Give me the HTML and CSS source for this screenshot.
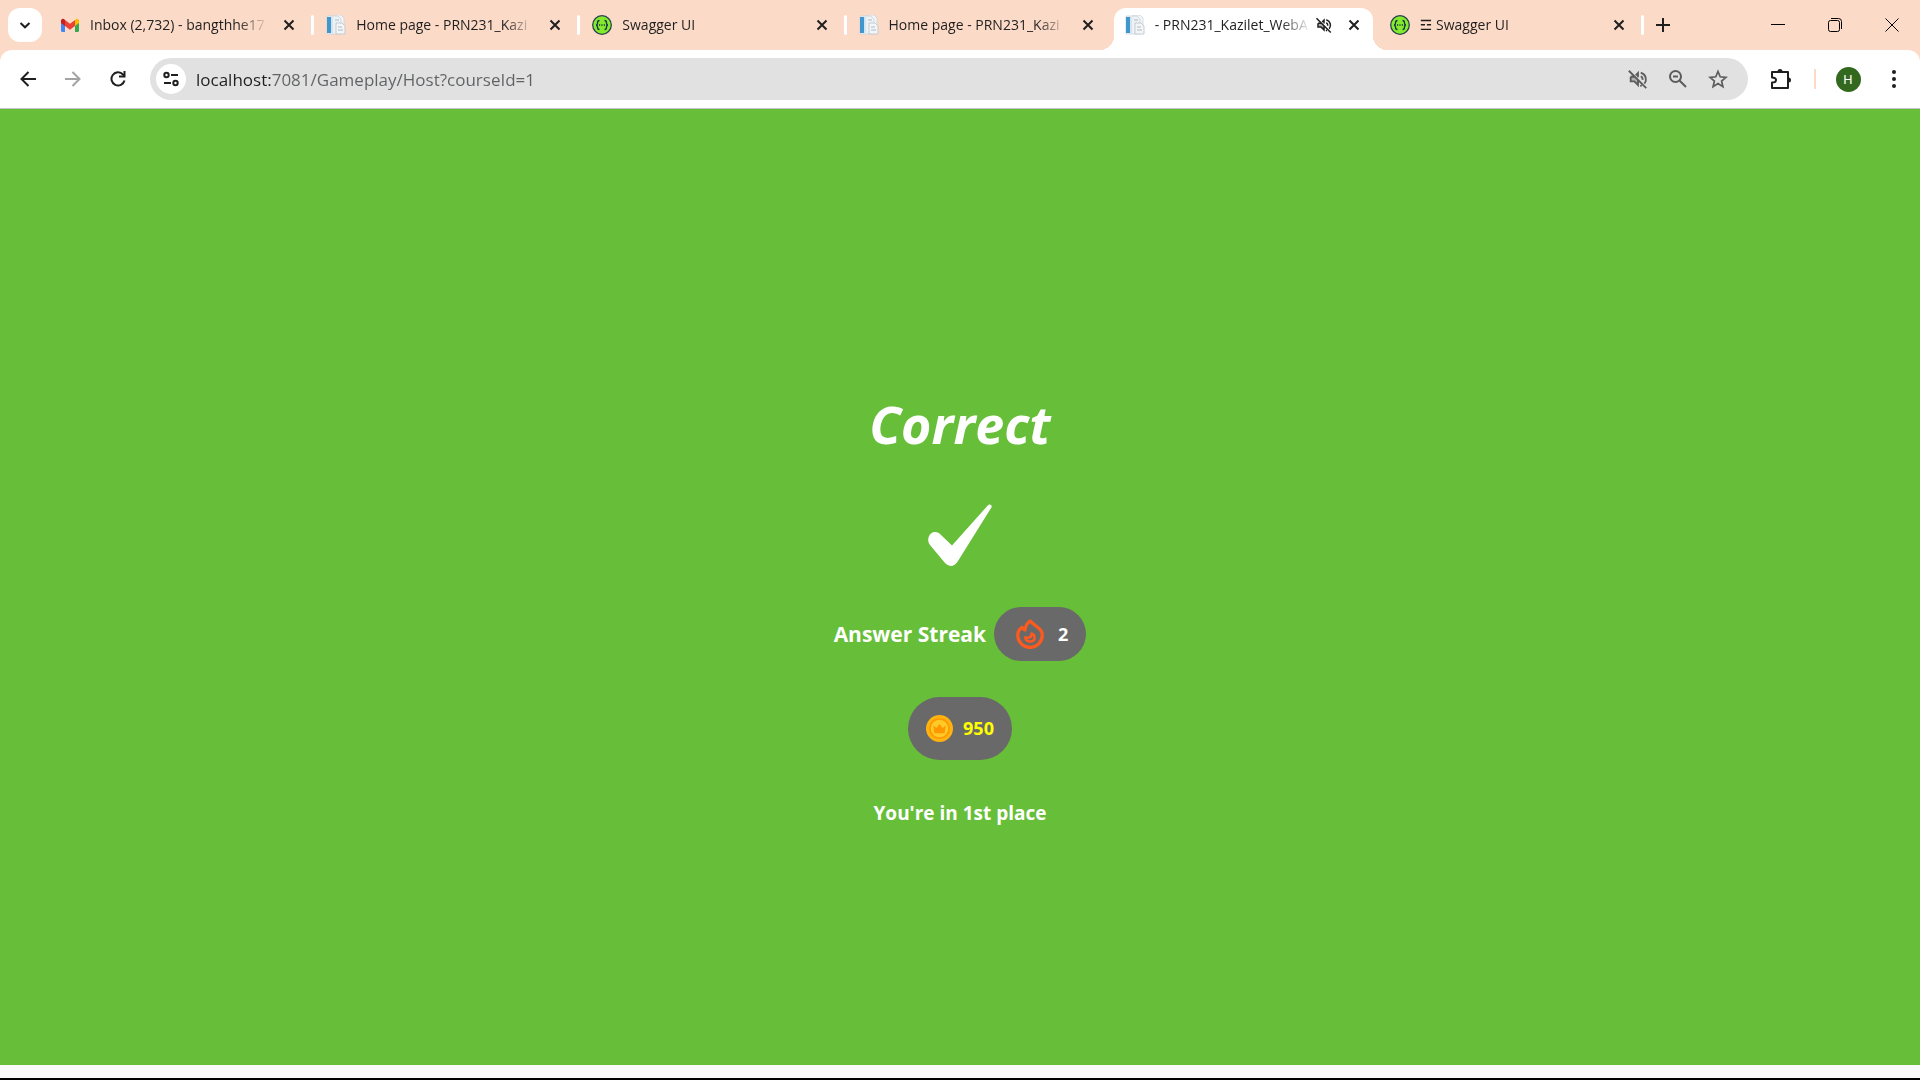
FILE: index.html
```html
<!DOCTYPE html>
<html lang="en">
<head>
<meta charset="utf-8">
<title>PRN231_Kazilet_WebApp</title>
<link rel="stylesheet" href="styles.css">
</head>
<body>
<svg class="defs" aria-hidden="true">
  <symbol id="close" viewBox="0 0 12 12"><path d="M1.500 1.500l9 9m0-9l-9 9" fill="none" stroke="currentColor" stroke-width="2"/></symbol>
  <symbol id="pages" viewBox="0 0 20 20">
    <path d="M8 0h7l3 3v12H8z" fill="#f3f6f8" stroke="#c6d0d7" stroke-width=".7"/>
    <path d="M1 1h11l3 3v15H1z" fill="#edf2f5" stroke="#c6d0d7" stroke-width=".7"/>
    <path d="M1 2h4v16H1z" fill="#4097ce"/><path d="M5 2h2v16H5z" fill="#d5e4ee"/>
    <path d="M10 8h6l3 3v8h-9z" fill="#f3f5f7" stroke="#b9c3ca" stroke-width=".8"/>
    <path d="M9 5h4M12 12h4M12 15h5" stroke="#aebbc5"/>
  </symbol>
  <symbol id="swagger" viewBox="0 0 20 20">
    <circle cx="10" cy="10" r="9.300" fill="#85ea2d" stroke="#26454b" stroke-width="1.300"/>
    <path d="M7.500 5.500c-2 0-2 .8-2 2.300S5.300 10 4 10c1.300 0 1.500.7 1.500 2.200s0 2.300 2 2.300M12.500 5.500c2 0 2 .8 2 2.300s.2 2.200 1.500 2.200c-1.300 0-1.500.7-1.500 2.200s0 2.300-2 2.300" fill="none" stroke="#173647" stroke-width="1.300"/>
    <path d="M7 10h1.200m1.200 0h1.200m1.200 0H13" stroke="#173647" stroke-width="1.300"/>
  </symbol>
  <symbol id="muted" viewBox="0 0 24 24">
    <path d="M2 3l19 19M4 9.500v5h4l4 4v-6M9.500 8L12 5.500V10M4 9.500h4M15 5c6 2 7 8 4 12M15 9c1.500.7 2.200 2 2 4M16 19l-1.500.7" fill="none" stroke="currentColor" stroke-width="2"/>
    <path d="M4 9.500h5l3 3v6l-4-4H4z" fill="currentColor" fill-opacity=".35"/>
  </symbol>
</svg>

<header class="browser">
  <div class="tabstrip">
    <button class="tab-search" aria-label="Search tabs"><svg class="i12" viewBox="0 0 12 12"><path d="M1.500 4L6 8.300 10.500 4" fill="none" stroke="currentColor" stroke-width="2"/></svg></button>
    <nav class="tabs" aria-label="Tabs">
      <div class="tab">
        <svg class="favicon" viewBox="0 0 20 20"><path d="M1 5h4v12H2.500A1.500 1.500 0 0 1 1 15.500z" fill="#4285f4"/><path d="M15 5h4v10.500a1.500 1.500 0 0 1-1.500 1.500H15z" fill="#34a853"/><path d="M15 5l1-1a2 2 0 0 1 3 1.500V8l-4 3z" fill="#fbbc04"/><path d="M5 5L4 4a2 2 0 0 0-3 1.500V8l4 3z" fill="#c5221f"/><path d="M5 5l5 3.800L15 5v6l-5 3.800L5 11z" fill="#ea4335"/></svg>
        <a class="tab-title" href="#">Inbox (2,732) - bangthhe17</a>
        <button class="tab-close" aria-label="Close tab"><svg class="i12"><use href="#close"/></svg></button>
      </div>
      <div class="tab">
        <svg class="favicon"><use href="#pages"/></svg>
        <a class="tab-title" href="#">Home page - PRN231_Kazi</a>
        <button class="tab-close" aria-label="Close tab"><svg class="i12"><use href="#close"/></svg></button>
      </div>
      <div class="tab">
        <svg class="favicon"><use href="#swagger"/></svg>
        <a class="tab-title" href="#">Swagger UI</a>
        <button class="tab-close" aria-label="Close tab"><svg class="i12"><use href="#close"/></svg></button>
      </div>
      <div class="tab before-active">
        <svg class="favicon"><use href="#pages"/></svg>
        <a class="tab-title" href="#">Home page - PRN231_Kazi</a>
        <button class="tab-close" aria-label="Close tab"><svg class="i12"><use href="#close"/></svg></button>
      </div>
      <div class="tab active">
        <svg class="favicon"><use href="#pages"/></svg>
        <a class="tab-title" href="#" aria-current="page">- PRN231_Kazilet_WebA</a>
        <button class="tab-mute" aria-label="Unmute tab"><svg class="i18"><use href="#muted"/></svg></button>
        <button class="tab-close" aria-label="Close tab"><svg class="i12"><use href="#close"/></svg></button>
      </div>
      <div class="tab">
        <svg class="favicon"><use href="#swagger"/></svg>
        <a class="tab-title" href="#">☲ Swagger UI</a>
        <button class="tab-close" aria-label="Close tab"><svg class="i12"><use href="#close"/></svg></button>
      </div>
    </nav>
    <button class="new-tab" aria-label="New tab"><svg class="i14" viewBox="0 0 14 14"><path d="M7 0v14M0 7h14" stroke="currentColor" stroke-width="2"/></svg></button>
    <div class="window-controls">
      <button aria-label="Minimize"><svg class="i14" viewBox="0 0 14 14"><path d="M0 6.500h14" stroke="currentColor"/></svg></button>
      <button aria-label="Restore"><svg class="i14" viewBox="0 0 14 14"><g fill="none" stroke="currentColor"><rect x=".5" y="2.500" width="11" height="11" rx="2"/><path d="M3 .5h7.500a3 3 0 0 1 3 3V11"/></g></svg></button>
      <button aria-label="Close window"><svg class="i14" viewBox="0 0 14 14"><path d="M.5.5l13 13m0-13l-13 13" stroke="currentColor"/></svg></button>
    </div>
  </div>

  <div class="toolbar">
    <div class="nav-buttons">
      <button aria-label="Back"><svg class="i16" viewBox="0 0 16 16"><path d="M16 8H2M8.500 1L1.500 8l7 7" fill="none" stroke="currentColor" stroke-width="2"/></svg></button>
      <button aria-label="Forward" disabled><svg class="i16" viewBox="0 0 16 16"><path d="M0 8h14M7.500 1l7 7-7 7" fill="none" stroke="currentColor" stroke-width="2"/></svg></button>
      <button aria-label="Reload"><svg class="i16" viewBox="0 0 16 16"><path d="M14.500 9.500A6.600 6.600 0 1 1 13 3.500L14.500 5" fill="none" stroke="currentColor" stroke-width="2"/><path d="M15.500 0v6.500H9v-2h4.500V0z" fill="currentColor"/></svg></button>
    </div>
    <form class="omnibox">
      <button type="button" class="site-info" aria-label="View site information"><svg class="i16" viewBox="0 0 16 16"><g fill="none" stroke="currentColor" stroke-width="2"><circle cx="3.500" cy="4" r="2.200"/><path d="M8 4h7M1 12h7"/><circle cx="12.500" cy="12" r="2.200"/></g></svg></button>
      <input class="url" aria-label="Address" value="localhost:7081/Gameplay/Host?courseId=1">
      <button type="button" class="omni-action" aria-label="Sound is muted"><svg class="i22"><use href="#muted"/></svg></button>
      <button type="button" class="omni-action" aria-label="Zoom"><svg class="i18" viewBox="0 0 18 18"><g fill="none" stroke="currentColor" stroke-width="2"><circle cx="6.500" cy="6.500" r="5.500"/><path d="M10.500 10.500L17 17M4 6.500h5"/></g></svg></button>
      <button type="button" class="omni-action" aria-label="Bookmark this page"><svg class="i20" viewBox="0 0 20 20"><path d="M10 2.500l2.200 5.300 5.700.5-4.300 3.700 1.300 5.600-4.900-3-4.900 3 1.300-5.600-4.300-3.700 5.700-.5z" fill="none" stroke="currentColor" stroke-width="1.700"/></svg></button>
    </form>
    <button class="extensions" aria-label="Extensions"><svg class="i22" viewBox="0 0 22 22"><path d="M2 4h16v16H2v-5.500c3 0 4-1.200 4-2.500S5 9.500 2 9.500z" fill="none" stroke="currentColor" stroke-width="2" stroke-linejoin="round"/><path d="M7.500 3.500a2.500 2.500 0 0 1 5 0zM18.500 9.500a2.500 2.500 0 0 1 0 5z" fill="currentColor"/></svg></button>
    <span class="divider"></span>
    <button class="profile" aria-label="Profile"><span class="avatar">H</span></button>
    <button class="menu" aria-label="Menu"><svg class="i18" viewBox="0 0 18 18" fill="currentColor"><circle cx="9" cy="2" r="2"/><circle cx="9" cy="9" r="2"/><circle cx="9" cy="16" r="2"/></svg></button>
  </div>
</header>

<main class="result">
  <h1>Correct</h1>
  <svg class="check" viewBox="0 0 64 62" role="img" aria-label="Correct answer"><path d="M61 .5q3-.5 2.700 2.500L30 57Q27 62 22.500 62 20 62 17 59L2 41C-1 37 0 32 3 29.500c3.500-2.500 7-1.500 9 .5l12 11.500L60 1.200z" fill="#fff"/></svg>
  <div class="streak">
    <span>Answer Streak</span>
    <span class="pill streak-pill">
      <svg class="flame" viewBox="0 0 28 30" aria-hidden="true"><g fill="none" stroke="#fc5a1e" stroke-width="3.300" stroke-linejoin="round"><path d="M14 2c-3.500 2.600-4.700 5.500-4.900 9-1.500-.6-2.500-1.500-3-2.700C3.500 10 1.700 13 1.700 16.300A12.200 12.200 0 0 0 14 28.300a12.200 12.200 0 0 0 12.300-12C26.300 9.500 20 8 14 2z"/><path d="M15.500 14.500c.2 2.300-1 3.800-3 4.300-1.300.3-2.300-.1-3.300-.6.300 2.700 2 4.300 4.800 4.300s4.600-1.600 4.600-4c0-1.900-1.100-3.400-3.100-4z" stroke-width="2.500"/></g></svg>
      <span>2</span>
    </span>
  </div>
  <div class="pill score-pill">
    <svg class="coin" viewBox="0 0 28 28" aria-hidden="true"><circle cx="14" cy="14" r="14" fill="#ffb30f"/><circle cx="14" cy="14" r="10" fill="#ffca28" stroke="#ff9800" stroke-width="1.800"/><path d="M7.500 11l3.500 2.500L14 9l3 4.500 3.500-2.500-1.300 8H8.800z" fill="#ff9800"/></svg>
    <span>950</span>
  </div>
  <p class="place">You're in 1st place</p>
</main>
<footer class="page-end"></footer>
</body>
</html>
```
FILE: styles.css
```css
* { box-sizing: border-box; }

body {
  margin: 0;
  min-height: 100vh;
  display: flex;
  flex-direction: column;
  font-family: "Open Sans", "Noto Sans", "DejaVu Sans", sans-serif;
  color: #1f1f1f;
  background: #f9f9f9;
}

button {
  display: flex;
  align-items: center;
  justify-content: center;
  padding: 0;
  border: 0;
  background: none;
  color: inherit;
  font: inherit;
}

svg { display: block; flex: none; }
.defs { display: none; }
.i12 { width: 12px; height: 12px; }
.i14 { width: 14px; height: 14px; }
.i16 { width: 16px; height: 16px; }
.i18 { width: 18px; height: 18px; }
.i20 { width: 20px; height: 20px; }
.i22 { width: 22px; height: 22px; }

/* Tab strip */
.browser { background: #fcdac8; }

.tabstrip {
  display: flex;
  align-items: center;
  height: 50px;
  padding-left: 8px;
}

.tab-search {
  flex: none;
  width: 34px;
  height: 34px;
  margin-right: 6px;
  border-radius: 12px;
  background: #fff;
}

.tabs {
  display: flex;
  flex: 0 1 1596px;
  min-width: 0;
  align-self: stretch;
  padding-top: 8px;
}

.tab {
  position: relative;
  display: flex;
  flex: 1 1 0;
  min-width: 0;
  align-items: center;
  padding: 0 19px 8px 12px;
  font-size: 14px;
}

.tab::after {
  content: "";
  position: absolute;
  top: 7px;
  right: 0;
  width: 3px;
  height: 20px;
  border-radius: 2px;
  background: #fff;
}

.tab.before-active::after { display: none; }

.tab.active {
  margin: 0 5px 0 1px;
  padding: 0 13px 8px 11px;
  border-radius: 12px 12px 0 0;
  background: #fff;
}

.tab.active::before,
.tab.active::after {
  content: "";
  position: absolute;
  top: auto;
  bottom: 0;
  width: 14px;
  height: 14px;
  border-radius: 0;
}

.tab.active::before {
  left: -14px;
  background: radial-gradient(circle at 0 0, transparent 14px, #fff 14px);
}

.tab.active::after {
  right: -14px;
  background: radial-gradient(circle at 100% 0, transparent 14px, #fff 14px);
}

.favicon { width: 20px; height: 20px; margin-right: 10px; }

.tab-title {
  flex: 1;
  min-width: 0;
  overflow: hidden;
  white-space: nowrap;
  line-height: 20px;
  color: inherit;
  text-decoration: none;
  mask-image: linear-gradient(to left, transparent, #000 30px);
}

.tab-close { width: 12px; height: 20px; margin-left: 15px; }
.tab-mute { width: 18px; height: 20px; margin-left: 4px; }

.new-tab { flex: none; width: 38px; height: 36px; }

.window-controls {
  display: flex;
  flex: none;
  margin-left: auto;
  align-self: stretch;
}

.window-controls button { width: 57px; color: #000; }

/* Toolbar */
.toolbar {
  display: flex;
  align-items: center;
  height: 59px;
  padding: 0 12px 0 5px;
  border-radius: 12px 12px 0 0;
  border-bottom: 1px solid #c4c4c4;
  background: #fff;
}

.nav-buttons { display: flex; flex: none; }
.nav-buttons button { width: 45px; height: 42px; }
.nav-buttons button:disabled { color: #a3a3a3; }

.omnibox {
  display: flex;
  flex: 1;
  min-width: 0;
  align-items: center;
  height: 42px;
  margin-left: 10px;
  padding: 0 10px 0 6px;
  border-radius: 21px;
  background: #e1e1e1;
}

.site-info {
  flex: none;
  width: 30px;
  height: 30px;
  border-radius: 50%;
  background: #fff;
}

.url {
  flex: 1;
  min-width: 0;
  height: 30px;
  margin-left: 10px;
  padding: 0;
  border: 0;
  outline: 0;
  font: 17px "Open Sans", "Noto Sans", sans-serif;
  color: transparent;
  background: linear-gradient(90deg, #1f1f1f 76px, #5f6163 76px);
  background-clip: text;
  -webkit-background-clip: text;
}

.omni-action { flex: none; width: 40px; height: 40px; color: #5c5c5c; }

.extensions { flex: none; width: 66px; height: 40px; }
.divider { flex: none; width: 2px; height: 20px; background: #fcdac8; }
.profile { flex: none; width: 64px; height: 40px; }

.avatar {
  width: 25px;
  height: 25px;
  border-radius: 50%;
  background: #33691e;
  color: #fff;
  font: 13px/25px Roboto, sans-serif;
  text-align: center;
}

.menu { flex: none; width: 28px; height: 40px; }

/* Answer result */
.result {
  flex: 1;
  display: flex;
  flex-direction: column;
  align-items: center;
  justify-content: center;
  padding-top: 40px;
  background: #67bf39;
  color: #fff;
  font-weight: 700;
}

.result h1 {
  margin: 0 0 44px;
  font-size: 52px;
  font-style: italic;
  line-height: 72px;
}

.check { width: 64px; height: 62px; margin-bottom: 41px; }

.streak {
  display: flex;
  align-items: center;
  gap: 8px;
  margin-bottom: 36px;
  font-size: 21px;
}

.pill {
  display: flex;
  align-items: center;
  background: #696969;
  font-size: 18px;
}

.streak-pill {
  gap: 14px;
  height: 54px;
  padding: 0 18px 0 22px;
  border-radius: 27px;
}

.flame { width: 28px; height: 30px; }

.score-pill {
  gap: 10px;
  height: 63px;
  padding: 0 18px;
  margin-bottom: 39px;
  border-radius: 32px;
  color: #ff0;
}

.coin { width: 27px; height: 27px; }

.place { margin: 0; font-size: 19px; line-height: 28px; }

.page-end { height: 15px; border-bottom: 2px solid #000; }
```
